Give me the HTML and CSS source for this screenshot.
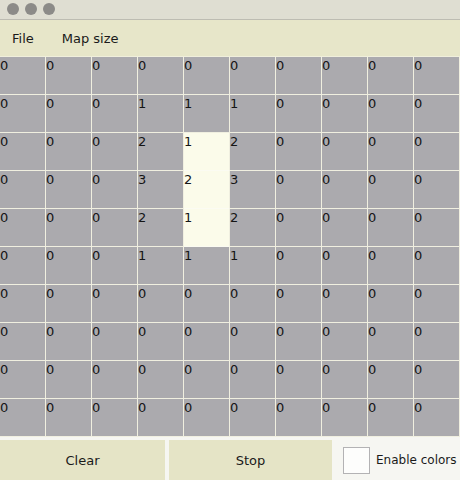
FILE: index.html
```html
<!DOCTYPE html>
<html>
<head>
<meta charset="utf-8">
<link rel="stylesheet" href="styles.css">
</head>
<body>
<div class="window">
  <div class="titlebar">
    <span class="dot"></span><span class="dot"></span><span class="dot"></span>
  </div>
  <div class="menubar">
    <span class="menu-item">File</span>
    <span class="menu-item">Map size</span>
  </div>
  <div class="grid" id="grid"></div>
  <div class="controls">
    <button class="btn btn-clear">Clear</button>
    <button class="btn btn-stop">Stop</button>
    <label class="check"><span class="box"></span><span class="check-label">Enable colors</span></label>
  </div>
</div>
<script src="app.js"></script>
</body>
</html>
```
FILE: styles.css
```css
* { box-sizing: border-box; }
html, body { margin: 0; padding: 0; }
body {
  width: 460px;
  height: 480px;
  overflow: hidden;
  font-family: "DejaVu Sans", "Liberation Sans", sans-serif;
  font-size: 13px;
  color: #1a1a1a;
  background: #f4f4ee;
}
.window { display: flex; flex-direction: column; width: 460px; height: 480px; }
.titlebar {
  height: 20px;
  background: #dfded2;
  border-bottom: 1px solid #bdbcb2;
  display: flex;
  align-items: center;
  gap: 6px;
  padding: 0 0 1px 7px;
}
.dot {
  width: 12px; height: 12px; border-radius: 50%;
  background: #8c8b88;
}
.menubar {
  height: 37px;
  background: #e7e6c9;
  border-bottom: 1px solid #f0efdc;
  display: flex;
  align-items: center;
  gap: 28px;
  padding: 1px 0 0 12px;
  font-size: 13px;
}
.grid {
  display: grid;
  grid-template-columns: repeat(10, 46px);
  grid-auto-rows: 38px;
  height: 380px;
  background: #ecebd6;
}
.cell {
  background: #abaaae;
  border-right: 1px solid #f0efe0;
  border-bottom: 1px solid #f0efe0;
  font-size: 13px;
  line-height: 15px;
  padding: 1px 0 0 0;
  color: #151515;
}
.cell.hot { background: #fbfbea; border-bottom-color: #fbfbf2; }
.controls {
  height: 43px;
  display: flex;
  align-items: stretch;
  padding-top: 3px;
  background: #f6f6f2;
}
.btn {
  border: none;
  margin: 0;
  background: #e5e4c6;
  font-family: inherit;
  font-size: 13px;
  color: #1a1a1a;
  padding: 0;
  flex-shrink: 0;
}
.btn-clear { width: 165px; margin-right: 4px; }
.btn-stop { width: 163px; }
.check {
  flex: 1;
  display: flex;
  align-items: center;
  padding-left: 11px;
  gap: 6px;
  white-space: nowrap;
  min-width: 0;
}
.box {
  flex-shrink: 0;
  width: 27px; height: 27px;
  border: 1px solid #b3b2b4;
  background: #fdfdfc;
}
.check-label { font-size: 12px; color: #1a1a1a; }
```
FILE: app.js
```js
var data = [
  [0,0,0,0,0,0,0,0,0,0],
  [0,0,0,1,1,1,0,0,0,0],
  [0,0,0,2,1,2,0,0,0,0],
  [0,0,0,3,2,3,0,0,0,0],
  [0,0,0,2,1,2,0,0,0,0],
  [0,0,0,1,1,1,0,0,0,0],
  [0,0,0,0,0,0,0,0,0,0],
  [0,0,0,0,0,0,0,0,0,0],
  [0,0,0,0,0,0,0,0,0,0],
  [0,0,0,0,0,0,0,0,0,0]
];
var hot = {"2,4":1,"3,4":1,"4,4":1};
var g = document.getElementById('grid');
for (var r = 0; r < 10; r++) {
  for (var c = 0; c < 10; c++) {
    var d = document.createElement('div');
    d.className = 'cell' + (hot[r + ',' + c] ? ' hot' : '');
    d.textContent = data[r][c];
    g.appendChild(d);
  }
}
```
